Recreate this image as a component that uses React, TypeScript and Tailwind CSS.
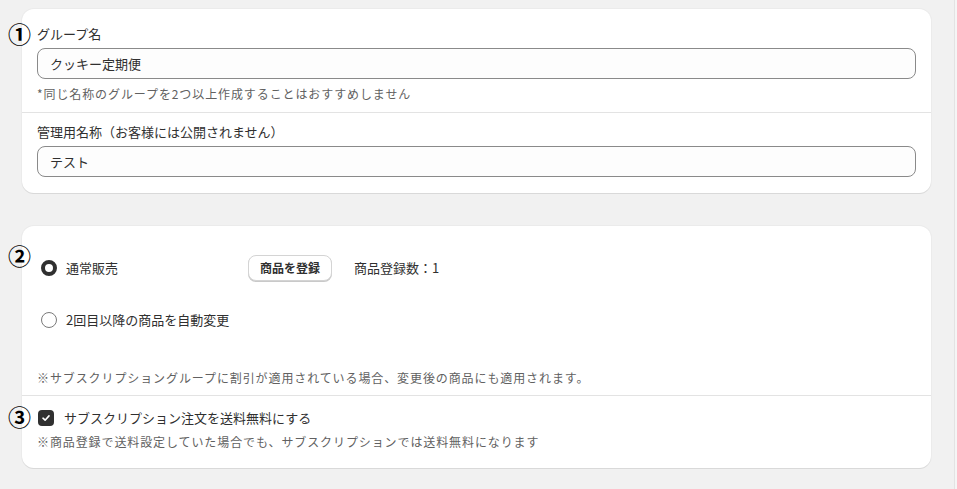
import React from 'react';

const font = { fontFamily: '"Noto Sans CJK JP", "Noto Sans", sans-serif' };

function Marker({ n, className }: { n: string; className: string }) {
  return (
    <span className={`absolute text-[23px] font-bold leading-none text-black ${className}`}>{n}</span>
  );
}

function TextField({ value }: { value: string }) {
  return (
    <div className="h-[31px] w-full rounded-[8px] border border-[#8a8a8a] bg-[#fdfdfd] px-[12px] flex items-center text-[13px] text-[#303030]">
      {value}
    </div>
  );
}

function Radio({ checked }: { checked?: boolean }) {
  return checked ? (
    <span className="w-[16px] h-[16px] rounded-full border-[4.5px] border-[#303030] bg-white shrink-0" />
  ) : (
    <span className="w-[16px] h-[16px] rounded-full border border-[#7a7a7a] bg-white shrink-0" />
  );
}

export default function App() {
  return (
    <div className="flex min-h-[489px] w-[957px] bg-[#f1f1f1]" style={font}>
      <div className="relative flex-1 pl-[22px] pr-[23px] pt-[9px] flex flex-col gap-[33px]">
        {/* card 1 */}
        <section className="relative bg-white rounded-[12px] shadow-[0_1px_0_0_#d9d9d9,0_0_0_1px_#ebebeb]">
          <Marker n="①" className="left-[-14px] top-[13px]" />
          <div className="px-[15px] pt-[16px] pb-[10px]">
            <div className="text-[13px] leading-[18px] text-[#303030] mb-[5px]">グループ名</div>
            <TextField value="クッキー定期便" />
            <p className="mt-[7px] text-[12px] leading-[16px] tracking-[0.9px] text-[#616161]">
              *同じ名称のグループを2つ以上作成することはおすすめしません
            </p>
          </div>
          <div className="border-t border-[#e3e3e3] px-[15px] pt-[10px] pb-[16px]">
            <div className="text-[13px] leading-[18px] text-[#303030] mb-[5px]">
              管理用名称（お客様には公開されません）
            </div>
            <TextField value="テスト" />
          </div>
        </section>

        {/* card 2 */}
        <section className="relative bg-white rounded-[12px] shadow-[0_1px_0_0_#d9d9d9,0_0_0_1px_#ebebeb]">
          <Marker n="②" className="left-[-14px] top-[18px]" />
          <Marker n="③" className="left-[-14px] top-[179px]" />
          <div className="px-[15px] pt-[29px] pb-[9px]">
            <div className="flex items-center h-[26px] pl-[4px]">
              <label className="flex items-center gap-[9px] w-[207px] text-[13px] text-[#303030]">
                <Radio checked />
                通常販売
              </label>
              <button className="h-[26px] px-[11px] rounded-[8px] bg-white border border-[#d4d4d4] shadow-[0_1px_0_0_#c9c9c9] text-[12px] font-bold text-[#303030]">
                商品を登録
              </button>
              <span className="ml-[22px] text-[13px] text-[#303030]">商品登録数：1</span>
            </div>
            <div className="flex items-center h-[26px] pl-[4px] mt-[26px]">
              <label className="flex items-center gap-[9px] text-[13px] text-[#303030]">
                <Radio />
                2回目以降の商品を自動変更
              </label>
            </div>
            <p className="mt-[37px] text-[12px] leading-[16px] tracking-[0.9px] text-[#616161]">
              ※サブスクリプショングループに割引が適用されている場合、変更後の商品にも適用されます。
            </p>
          </div>
          <div className="border-t border-[#e3e3e3] px-[15px] pt-[13px] pb-[18px]">
            <label className="flex items-center gap-[10px] h-[18px] pl-[1px] text-[13px] text-[#303030]">
              <span className="w-[16px] h-[16px] rounded-[4px] bg-[#303030] flex items-center justify-center shrink-0">
                <svg width="10" height="10" viewBox="0 0 10 10" fill="none">
                  <path d="M2 5.2 4.1 7.2 8 2.9" stroke="white" strokeWidth="1.6" strokeLinecap="round" strokeLinejoin="round" />
                </svg>
              </span>
              サブスクリプション注文を送料無料にする
            </label>
            <p className="mt-[7px] text-[12px] leading-[16px] tracking-[0.9px] text-[#616161]">
              ※商品登録で送料設定していた場合でも、サブスクリプションでは送料無料になります
            </p>
          </div>
        </section>
      </div>
      <div className="w-[3px] border-l border-[#e3e3e3] bg-[#f5f5f5]" />
    </div>
  );
}
